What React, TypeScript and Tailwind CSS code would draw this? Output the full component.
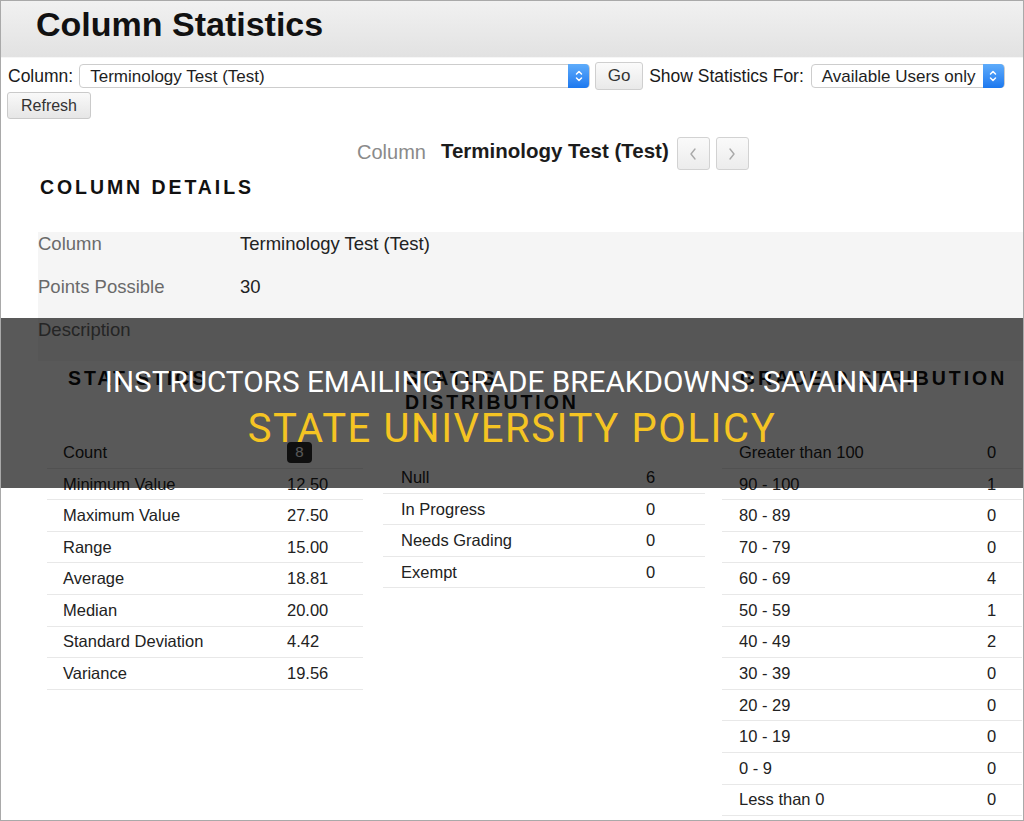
import React from "react";

const statsRows = [
  ["Count", "8"],
  ["Minimum Value", "12.50"],
  ["Maximum Value", "27.50"],
  ["Range", "15.00"],
  ["Average", "18.81"],
  ["Median", "20.00"],
  ["Standard Deviation", "4.42"],
  ["Variance", "19.56"],
];

const statusRows = [
  ["Null", "6"],
  ["In Progress", "0"],
  ["Needs Grading", "0"],
  ["Exempt", "0"],
];

const gradeRows = [
  ["Greater than 100", "0"],
  ["90 - 100", "1"],
  ["80 - 89", "0"],
  ["70 - 79", "0"],
  ["60 - 69", "4"],
  ["50 - 59", "1"],
  ["40 - 49", "2"],
  ["30 - 39", "0"],
  ["20 - 29", "0"],
  ["10 - 19", "0"],
  ["0 - 9", "0"],
  ["Less than 0", "0"],
];

const Stepper = () => (
  <span className="flex h-[24px] w-[21px] items-center justify-center rounded-r-[4px] bg-gradient-to-b from-[#5eacfb] to-[#1b78ef]">
    <svg width="8" height="14" viewBox="0 0 8 14" fill="none" stroke="white" strokeWidth="1.5" strokeLinecap="round" strokeLinejoin="round">
      <path d="M1.5 5 L4 2.5 L6.5 5" />
      <path d="M1.5 9 L4 11.5 L6.5 9" />
    </svg>
  </span>
);

const Select = ({ value, width }: { value: string; width: string }) => (
  <div className={"flex h-[24px] items-center rounded-[4px] border border-[#cdcdcd] bg-white " + width}>
    <span className="flex-1 pl-[10px] text-[17px] leading-none text-[#1e1e1e]">{value}</span>
    <Stepper />
  </div>
);

const NavButton = ({ dir }: { dir: "left" | "right" }) => (
  <button className="flex h-[33px] w-[33px] items-center justify-center rounded-[3px] border border-[#d2d2d2] bg-gradient-to-b from-[#fafafa] to-[#ececec]">
    <svg width="10" height="16" viewBox="0 0 10 16" fill="none" stroke="#a8a8a8" strokeWidth="1.4" strokeLinecap="round" strokeLinejoin="round">
      {dir === "left" ? <path d="M7 3 L3 8 L7 13" /> : <path d="M3 3 L7 8 L3 13" />}
    </svg>
  </button>
);

const StatTable = ({
  rows,
  labelClass,
  badgeFirst,
}: {
  rows: string[][];
  labelClass: string;
  badgeFirst?: boolean;
}) => (
  <div>
    {rows.map(([label, value], i) => (
      <div key={label} className="flex h-[31.6px] items-center border-b border-[#e8e8e8] text-[16.5px] text-[#222]">
        <span className={labelClass}>{label}</span>
        {badgeFirst && i === 0 ? (
          <span className="flex h-[21px] w-[25px] items-center justify-center rounded-[4px] bg-[#2b2b2b] text-[15px] text-white">
            {value}
          </span>
        ) : (
          <span>{value}</span>
        )}
      </div>
    ))}
  </div>
);

export default function App() {
  return (
    <div className="relative h-[821px] w-[1024px] overflow-hidden border border-[#a9a9a9] bg-white font-['Liberation_Sans',Arial,sans-serif]">
      {/* page header */}
      <div className="h-[57px] border-b border-[#f6f6f6] bg-gradient-to-b from-[#f1f1f1] to-[#e2e2e2] pl-[35px] pt-[6px]">
        <h1 className="text-[34px] font-bold leading-none text-[#111]">Column Statistics</h1>
      </div>

      {/* controls */}
      <div className="mt-[4px] flex h-[28px] items-center pl-[7px] text-[17.5px] text-[#1a1a1a]">
        <span>Column:</span>
        <div className="ml-[6px]">
          <Select value="Terminology Test (Test)" width="w-[511px]" />
        </div>
        <button className="ml-[5px] h-[28px] w-[48px] rounded-[3px] border border-[#cfcfcf] bg-gradient-to-b from-[#fbfbfb] to-[#e9e9e9] text-[17px] text-[#333]">
          Go
        </button>
        <span className="ml-[6px]">Show Statistics For:</span>
        <div className="ml-[7px]">
          <Select value="Available Users only" width="w-[194px]" />
        </div>
      </div>
      <button className="ml-[6px] mt-[2px] h-[27px] w-[84px] rounded-[3px] border border-[#cacaca] bg-gradient-to-b from-[#f9f9f9] to-[#e6e6e6] text-[16px] text-[#333]">
        Refresh
      </button>

      {/* column navigation */}
      <div className="mt-[18px] flex h-[33px] items-center pl-[356px]">
        <span className="pb-[4px] text-[20px] text-[#8a8a8a]">Column</span>
        <span className="ml-[15px] pb-[4px] text-[20.5px] font-bold text-[#1c1c1c]">Terminology Test (Test)</span>
        <div className="ml-[8px] flex gap-[6px]">
          <NavButton dir="left" />
          <NavButton dir="right" />
        </div>
      </div>

      <h2 className="mt-[5px] pl-[39px] text-[19.5px] font-bold uppercase leading-[24px] tracking-[0.15em] text-[#111]">
        Column Details
      </h2>

      {/* column details */}
      <div className="ml-[37px] mt-[33px] bg-[#f5f5f5] text-[18.5px] leading-[22px]">
        <div className="flex h-[43px] pt-[1px]">
          <span className="w-[202px] text-[#6a6a6a]">Column</span>
          <span className="text-[#222]">Terminology Test (Test)</span>
        </div>
        <div className="flex h-[43px] pt-[1px]">
          <span className="w-[202px] text-[#6a6a6a]">Points Possible</span>
          <span className="text-[#222]">30</span>
        </div>
        <div className="flex h-[43px] pt-[1px]">
          <span className="w-[202px] text-[#6a6a6a]">Description</span>
        </div>
      </div>

      {/* statistics columns */}
      <div className="mt-[5px] flex pl-[46px]">
        <div className="w-[316px]">
          <h3 className="pl-[21px] text-[19.5px] font-bold uppercase leading-[24px] tracking-[0.15em] text-[#111]">
            Statistics
          </h3>
          <div className="mt-[47px]">
            <StatTable rows={statsRows} labelClass="w-[240px] pl-[16px]" badgeFirst />
          </div>
        </div>
        <div className="ml-[20px] w-[322px]">
          <h3 className="pl-[22px] text-[19.5px] font-bold uppercase leading-[24px] tracking-[0.15em] text-[#111]">
            Status
            <br />
            Distribution
          </h3>
          <div className="mt-[48px]">
            <StatTable rows={statusRows} labelClass="w-[263px] pl-[18px]" />
          </div>
        </div>
        <div className="ml-[17px] w-[300px]">
          <h3 className="whitespace-nowrap pl-[18px] text-[19.5px] font-bold uppercase leading-[24px] tracking-[0.15em] text-[#111]">
            Grade Distribution
          </h3>
          <div className="mt-[47px]">
            <StatTable rows={gradeRows} labelClass="w-[265px] pl-[17px]" />
          </div>
        </div>
      </div>

      {/* title band over the screenshot */}
      <div className="absolute left-[-1px] right-[-1px] top-[317px] flex h-[170px] flex-col items-center justify-center bg-black/65 pt-[7px] font-['Roboto',sans-serif] uppercase">
        <div className="flex h-[44px] items-center text-[29.7px] leading-none text-white">
          Instructors emailing grade breakdowns: Savannah
        </div>
        <div className="flex h-[50px] items-center text-[40px] leading-none tracking-[0.04em] text-[#f5c423]">
          State University Policy
        </div>
      </div>
    </div>
  );
}
